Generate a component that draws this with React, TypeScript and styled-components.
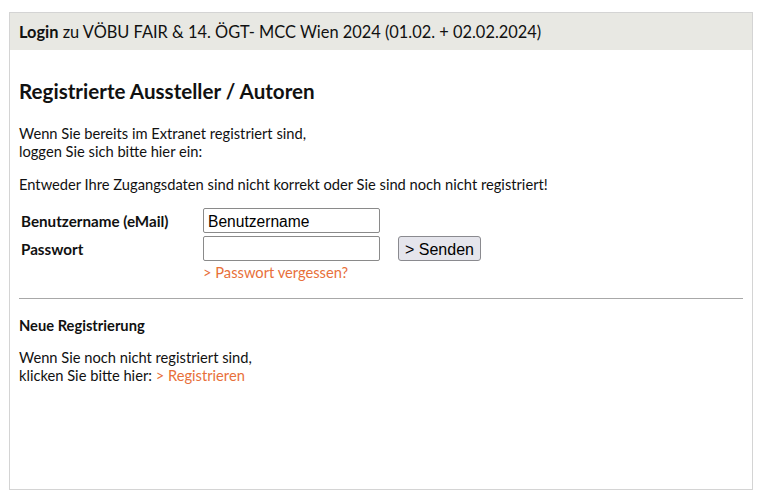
import styled, { createGlobalStyle } from 'styled-components'

const GlobalStyle = createGlobalStyle`
  html, body {
    margin: 0;
    padding: 0;
    background: #fff;
  }
  body {
    font-family: Lato, 'Noto Sans', sans-serif;
    color: #111;
  }
`

const Page = styled.div`
  padding: 12px 11px 10px 9px;
`

const Panel = styled.div`
  height: 476px;
  border: 1px solid #d4d4d4;
  background: #fff;
  display: flex;
  flex-direction: column;
`

const Header = styled.div`
  background: #e8e8e3;
  height: 37px;
  display: flex;
  align-items: center;
  padding: 0 9px;
  font-size: 16.4px;
  color: #111;

  b {
    font-weight: 700;
  }
`

const Body = styled.div`
  padding: 28px 9px 0 9px;
`

const Title = styled.h1`
  margin: 0 0 20px;
  font-size: 20.6px;
  font-weight: 700;
  line-height: 26px;
`

const Text = styled.p`
  margin: 0 0 15px;
  font-size: 14.7px;
  line-height: 18px;
`

const Link = styled.a`
  color: #e8703a;
  text-decoration: none;
`

const Form = styled.div`
  display: grid;
  grid-template-columns: 182px 177px auto;
  row-gap: 3px;
  align-items: center;
  padding-left: 2px;
  margin-top: 4px;
`

const Label = styled.label`
  font-size: 15.2px;
  font-weight: 700;
`

const Input = styled.input`
  box-sizing: border-box;
  width: 177px;
  height: 25px;
  border: 1px solid #8a8a8a;
  border-radius: 2px;
  padding: 2px 4px 0;
  font-family: 'Liberation Sans', Arial, sans-serif;
  font-size: 15.6px;
  color: #000;
  outline: none;
`

const Button = styled.button`
  justify-self: start;
  margin-left: 18px;
  height: 25px;
  padding: 2px 6px 0;
  border: 1px solid #8a8a8f;
  border-radius: 3px;
  background: #e5e5ec;
  font-family: 'Liberation Sans', Arial, sans-serif;
  font-size: 16px;
  color: #000;
`

const Forgot = styled(Link)`
  grid-column: 2 / span 2;
  font-size: 14.7px;
  line-height: 16px;
`

const Divider = styled.hr`
  margin: 18px 0 17px;
  border: 0;
  border-top: 1px solid #a8a8a8;
`

const SubTitle = styled.h2`
  margin: 0 0 14px;
  font-size: 14.7px;
  font-weight: 700;
  line-height: 18px;
`

export default function App() {
  return (
    <>
      <GlobalStyle />
      <Page>
        <Panel>
          <Header>
            <span>
              <b>Login</b> zu VÖBU FAIR &amp; 14. ÖGT- MCC Wien 2024 (01.02. + 02.02.2024)
            </span>
          </Header>
          <Body>
            <Title>Registrierte Aussteller / Autoren</Title>
            <Text>
              Wenn Sie bereits im Extranet registriert sind,
              <br />
              loggen Sie sich bitte hier ein:
            </Text>
            <Text>Entweder Ihre Zugangsdaten sind nicht korrekt oder Sie sind noch nicht registriert!</Text>
            <Form>
              <Label>Benutzername (eMail)</Label>
              <Input defaultValue="Benutzername" />
              <span />
              <Label>Passwort</Label>
              <Input type="password" />
              <Button>&gt; Senden</Button>
              <span />
              <Forgot href="#">&gt; Passwort vergessen?</Forgot>
            </Form>
            <Divider />
            <SubTitle>Neue Registrierung</SubTitle>
            <Text>
              Wenn Sie noch nicht registriert sind,
              <br />
              klicken Sie bitte hier: <Link href="#">&gt; Registrieren</Link>
            </Text>
          </Body>
        </Panel>
      </Page>
    </>
  )
}
